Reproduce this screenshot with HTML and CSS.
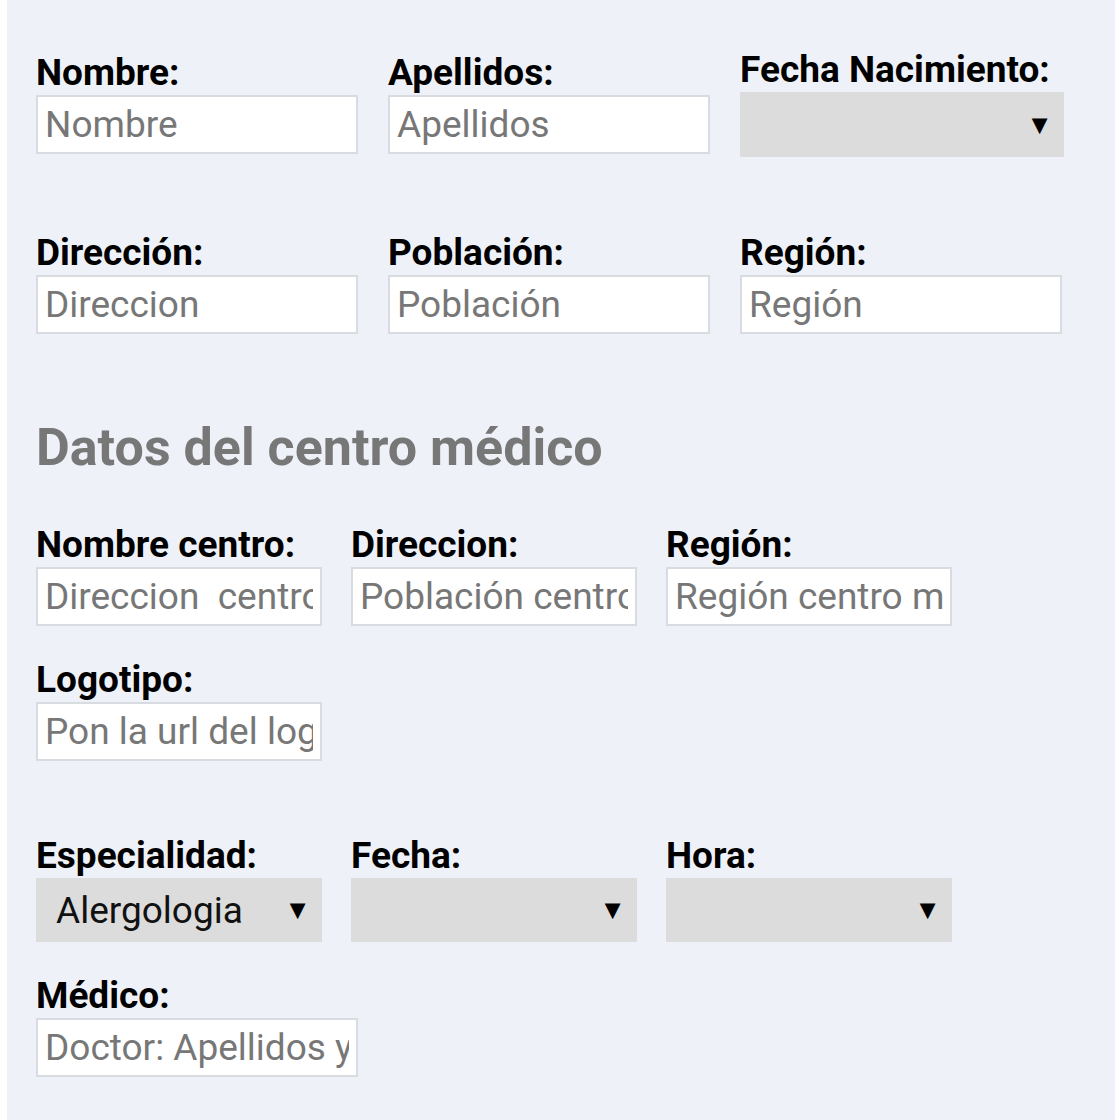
FILE: index.html
```html
<!DOCTYPE html>
<html lang="es">

<head>
  <meta charset="UTF-8">
  <meta name="viewport" content="width=device-width, initial-scale=1.0">
  <title>Cita médica</title>
  <link rel="stylesheet" href="styles.css">
</head>

<body>
  <div class="page">
    <div class="form-row wide">
      <div class="field">
        <label for="nombre">Nombre:</label>
        <input id="nombre" type="text" placeholder="Nombre">
      </div>
      <div class="field">
        <label for="apellidos">Apellidos:</label>
        <input id="apellidos" type="text" placeholder="Apellidos">
      </div>
      <div class="field">
        <label for="nacimiento">Fecha Nacimiento:</label>
        <div class="select-box tall">
          <select id="nacimiento">
            <option value=""></option>
          </select>
        </div>
      </div>
    </div>

    <div class="form-row wide">
      <div class="field">
        <label for="direccion">Dirección:</label>
        <input id="direccion" type="text" placeholder="Direccion">
      </div>
      <div class="field">
        <label for="poblacion">Población:</label>
        <input id="poblacion" type="text" placeholder="Población">
      </div>
      <div class="field">
        <label for="region">Región:</label>
        <input id="region" type="text" placeholder="Región">
      </div>
    </div>

    <h2 class="section-title">Datos del centro médico</h2>

    <div class="form-row narrow">
      <div class="field">
        <label for="centro">Nombre centro:</label>
        <input id="centro" type="text" placeholder="Direccion  centro médico">
      </div>
      <div class="field">
        <label for="centroDir">Direccion:</label>
        <input id="centroDir" type="text" placeholder="Población centro médico">
      </div>
      <div class="field">
        <label for="centroRegion">Región:</label>
        <input id="centroRegion" type="text" placeholder="Región centro médico">
      </div>
    </div>

    <div class="form-row narrow">
      <div class="field">
        <label for="logo">Logotipo:</label>
        <input id="logo" type="text" placeholder="Pon la url del logotipo">
      </div>
    </div>

    <div class="form-row narrow spaced">
      <div class="field">
        <label for="especialidad">Especialidad:</label>
        <div class="select-box">
          <select id="especialidad">
            <option value="Alergologia">Alergologia</option>
            <option value="Cardiologia">Cardiologia</option>
            <option value="Dermatologia">Dermatologia</option>
          </select>
        </div>
      </div>
      <div class="field">
        <label for="fecha">Fecha:</label>
        <div class="select-box">
          <select id="fecha">
            <option value=""></option>
          </select>
        </div>
      </div>
      <div class="field">
        <label for="hora">Hora:</label>
        <div class="select-box">
          <select id="hora">
            <option value=""></option>
          </select>
        </div>
      </div>
    </div>

    <div class="form-row wide">
      <div class="field">
        <label for="medico">Médico:</label>
        <input id="medico" type="text" placeholder="Doctor: Apellidos y nombre">
      </div>
    </div>
  </div>
</body>

</html>
```

FILE: styles.css
```css
body {
  margin: 0;
  background-color: #fff;
  font-family: Roboto, "Noto Sans", Arial, sans-serif;
}

.page {
  margin: 0 5px 0 7px;
  min-height: 1120px;
  background-color: #eef2f8;
  padding: 50px 0 0 29px;
  box-sizing: border-box;
}

.form-row {
  display: flex;
  align-items: center;
  margin-bottom: 76px;
}

.form-row.wide {
  gap: 30px;
}

.form-row.wide .field {
  width: 322px;
}

.form-row.narrow {
  gap: 29px;
  margin-bottom: 34px;
}

.form-row.narrow .field {
  width: 286px;
}

.form-row.narrow.spaced {
  margin-top: 75px;
  margin-bottom: 34px;
}

.field label {
  display: block;
  font-size: 37px;
  font-weight: 700;
  color: #000;
  line-height: 40px;
  margin-bottom: 2px;
  white-space: nowrap;
}

.field input {
  display: block;
  width: 100%;
  height: 59px;
  box-sizing: border-box;
  border: 2px solid #d8dbdf;
  background-color: #fff;
  padding: 0 7px;
  font-family: Roboto, "Noto Sans", Arial, sans-serif;
  font-size: 37px;
  color: #222;
  outline: none;
}

.field input::placeholder {
  color: #777;
}

.section-title {
  margin: 84px 0 47px;
  font-size: 52px;
  font-weight: 700;
  color: #777;
  line-height: 60px;
}

.select-box {
  position: relative;
  height: 64px;
  background-color: #dcdcdc;
}

.select-box.tall {
  width: 324px;
  height: 65px;
}

.select-box select {
  appearance: none;
  -webkit-appearance: none;
  width: 100%;
  height: 100%;
  border: none;
  background: transparent;
  padding: 0 50px 0 20px;
  font-family: Roboto, "Noto Sans", Arial, sans-serif;
  font-size: 37px;
  color: #111;
  outline: none;
}

.select-box::after {
  content: "\25BC";
  position: absolute;
  right: 11px;
  top: 50%;
  transform: translateY(-50%);
  font-size: 27px;
  color: #000;
  pointer-events: none;
}
```
